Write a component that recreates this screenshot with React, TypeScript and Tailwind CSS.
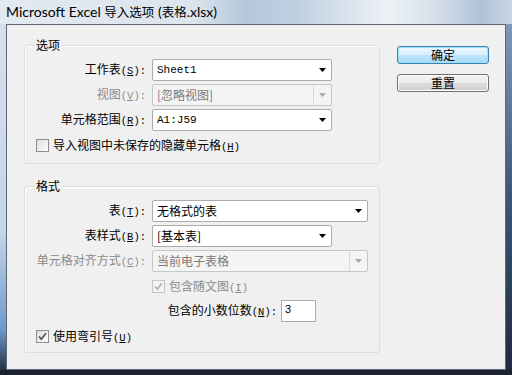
import React from "react";

const cjk = "font-['Noto_Sans_CJK_SC',sans-serif]";
const mono = "font-['Liberation_Mono','Noto_Sans_CJK_SC',monospace]";

// 中文标签 + (快捷键):
function KeyLabel({ text, k, colon = true, disabled = false }: { text: string; k: string; colon?: boolean; disabled?: boolean }) {
  return (
    <span className={`${cjk} text-[12px] leading-[14px] whitespace-nowrap ${disabled ? "text-[#8b8b8b]" : "text-black"}`}>
      {text}
      <span className={`${mono} text-[10.5px]`}>
        (<span className="underline underline-offset-1">{k}</span>){colon ? ":" : ""}
      </span>
    </span>
  );
}

function Arrow({ disabled = false }: { disabled?: boolean }) {
  return (
    <svg width="7" height="4" viewBox="0 0 7 4">
      <path d="M0 0h7L3.5 4z" fill={disabled ? "#a8a8a8" : "#000"} />
    </svg>
  );
}

function Combo({ value, wide = false, disabled = false, monoText = false }: { value: string; wide?: boolean; disabled?: boolean; monoText?: boolean }) {
  return (
    <div
      className={`flex h-[22px] items-center rounded-[2px] border ${wide ? "w-[216px]" : "w-[180px]"} ${
        disabled ? "border-[#c3c7ca] bg-[#f4f4f4]" : "border-[#acacac] bg-white"
      }`}
    >
      <div
        className={`flex-1 pl-[4px] ${monoText ? `${mono} text-[11px]` : `${cjk} text-[12px]`} leading-[14px] ${
          disabled ? "text-[#7a7a7a]" : "text-black"
        }`}
      >
        {value}
      </div>
      <div className={`flex h-full w-[18px] items-center justify-center ${disabled ? "border-l border-[#dadada]" : ""}`}>
        <Arrow disabled={disabled} />
      </div>
    </div>
  );
}

function Check({ checked = false, disabled = false }: { checked?: boolean; disabled?: boolean }) {
  return (
    <div
      className={`flex h-[13px] w-[13px] shrink-0 items-center justify-center border ${
        disabled ? "border-[#c4c4c4] bg-[#f4f4f4]" : "border-[#8e8f8f] bg-[linear-gradient(135deg,#dcdcdc,#ffffff)]"
      }`}
    >
      {checked && (
        <svg width="9" height="9" viewBox="0 0 9 9">
          <path d="M1 4.5l2.3 2.6L8 1.2" fill="none" stroke={disabled ? "#b3b3b3" : "#4d5a6e"} strokeWidth="1.8" />
        </svg>
      )}
    </div>
  );
}

function Row({ label, children }: { label: React.ReactNode; children: React.ReactNode }) {
  return (
    <div className="flex h-[22px] items-center">
      <div className="w-[121px] text-right">{label}</div>
      <div className="ml-[6px]">{children}</div>
    </div>
  );
}

function Group({ title, className, children }: { title: string; className: string; children: React.ReactNode }) {
  return (
    <div className={`relative w-[356px] rounded-[3px] border border-[#d5dfe5] shadow-[inset_1px_1px_0_#ffffff] ${className}`}>
      <span className={`absolute left-[9px] top-[-8px] bg-[#f0f0f0] px-[2px] ${cjk} text-[12px] leading-[14px] text-black`}>
        {title}
      </span>
      {children}
    </div>
  );
}

function Button({ label, primary = false }: { label: string; primary?: boolean }) {
  return (
    <div
      className={`flex h-[18px] w-[92px] items-center justify-center rounded-[3px] border ${cjk} text-[12px] leading-[14px] text-black ${
        primary
          ? "border-[#3c7fb1] bg-[linear-gradient(#eaf6fd_0%,#d9f0fc_50%,#bee6fd_50%,#a7d9f5_100%)] shadow-[inset_0_0_0_1px_#9ce0f7]"
          : "border-[#707070] bg-[linear-gradient(#f2f2f2_0%,#ebebeb_50%,#dddddd_50%,#cfcfcf_100%)] shadow-[inset_0_0_0_1px_#fcfcfc]"
      }`}
    >
      {label}
    </div>
  );
}

export default function App() {
  return (
    <div className="flex h-[375px] w-[512px] flex-col overflow-hidden bg-[#1c2230]">
      {/* 标题栏 */}
      <div className="flex h-[24px] items-center bg-[linear-gradient(90deg,#e3e9f0_0%,#dce4ed_38%,#b4c7dc_48%,#c0d0e2_58%,#edf2f7_76%,#d2dde9_86%,#aec2d9_94%,#c9d6e5_100%)] pl-[6px]">
        <span className="font-['Lato','Noto_Sans_CJK_SC',sans-serif] text-[14px] leading-[18px] text-black">
          Microsoft Excel <span className={`${cjk} text-[12.5px]`}>导入选项</span> (
          <span className={`${cjk} text-[12.5px]`}>表格</span>.xlsx)
        </span>
      </div>

      <div className="flex h-[346px]">
        <div className="w-[6px] bg-[linear-gradient(#d5e0ec_0%,#c4d5e8_60%,#6f9acb_88%,#243247_100%)]" />

        {/* 客户区 */}
        <div className="flex w-[500px] border border-[#5d6977] bg-[#f0f0f0] pl-[17px] pt-[20px] text-[12px] leading-[14px]">
          <div className="flex flex-col">
            <Group title="选项" className="h-[119px] pt-[13px]">
              <div className="flex flex-col gap-[3px]">
                <Row label={<KeyLabel text="工作表" k="S" />}>
                  <Combo value="Sheet1" monoText />
                </Row>
                <Row label={<KeyLabel text="视图" k="V" disabled />}>
                  <Combo value="[忽略视图]" disabled />
                </Row>
                <Row label={<KeyLabel text="单元格范围" k="R" />}>
                  <Combo value="A1:J59" monoText />
                </Row>
              </div>
              <div className="mt-[8px] flex h-[13px] items-center gap-[4px] pl-[11px]">
                <Check />
                <KeyLabel text="导入视图中未保存的隐藏单元格" k="H" colon={false} />
              </div>
            </Group>

            <Group title="格式" className="mt-[22px] h-[167px] pt-[13px]">
              <div className="flex flex-col gap-[3px]">
                <Row label={<KeyLabel text="表" k="T" />}>
                  <Combo value="无格式的表" wide />
                </Row>
                <Row label={<KeyLabel text="表样式" k="B" />}>
                  <Combo value="[基本表]" />
                </Row>
                <Row label={<KeyLabel text="单元格对齐方式" k="C" disabled />}>
                  <Combo value="当前电子表格" wide disabled />
                </Row>
              </div>
              <div className="mt-[8px] flex h-[13px] items-center gap-[4px] pl-[127px]">
                <Check checked disabled />
                <KeyLabel text="包含随文图" k="I" colon={false} disabled />
              </div>
              <div className="mt-[7px] flex h-[22px] items-center">
                <div className="w-[252px] text-right">
                  <KeyLabel text="包含的小数位数" k="N" />
                </div>
                <div className="ml-[4px] h-[22px] w-[35px] border border-[#acacac] bg-white pl-[3px] pt-[2px] font-['Liberation_Sans',sans-serif] text-[11px] leading-[13px] text-black">
                  3
                </div>
              </div>
              <div className="mt-[8px] flex h-[13px] items-center gap-[4px] pl-[11px]">
                <Check checked />
                <KeyLabel text="使用弯引号" k="U" colon={false} />
              </div>
            </Group>
          </div>

          {/* 按钮 */}
          <div className="ml-[17px] mt-[1px] flex flex-col gap-[10px]">
            <Button label="确定" primary />
            <Button label="重置" />
          </div>
        </div>

        <div className="w-[6px] bg-[linear-gradient(#7f98b8_0%,#3d5677_50%,#1f2b3d_100%)]" />
      </div>
    </div>
  );
}
